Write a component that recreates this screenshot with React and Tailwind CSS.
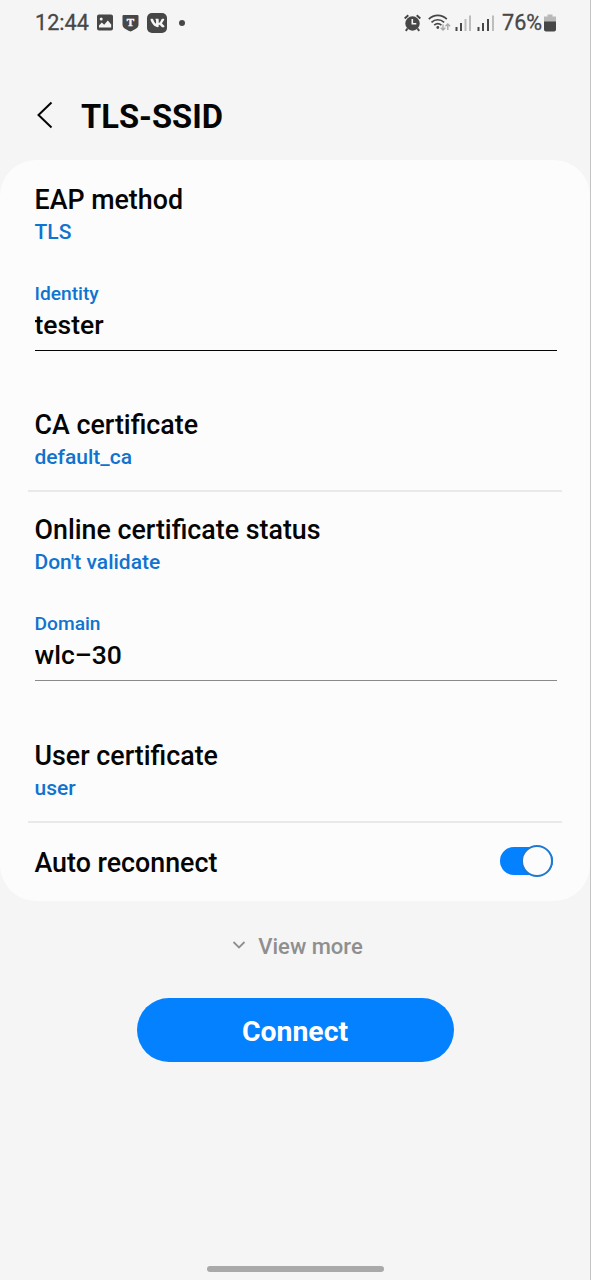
import React, { useState } from 'react';
import { FaVk } from 'react-icons/fa';

const StatusBar = () => (
  <div className="flex h-[45px] items-center justify-between pl-[35px] pr-[34px] text-[#474747]">
    <div className="flex items-center">
      <span className="w-[62px] text-[21.6px] font-normal leading-[26px] [-webkit-text-stroke:0.3px_#474747]">12:44</span>
      <svg className="mr-[9px]" width="16" height="17" viewBox="0 0 16 17">
        <path
          fill="currentColor"
          fillRule="evenodd"
          d="M2 0.5h12a2 2 0 0 1 2 2v12a2 2 0 0 1-2 2H2a2 2 0 0 1-2-2v-12a2 2 0 0 1 2-2zM2 13.6h12.2v-3.2l-3.4-3.8-3.6 4.2-2.4-2.2L2 11.4zM4.2 3.4a1.5 1.5 0 1 0 0 3 1.5 1.5 0 0 0 0-3z"
        />
      </svg>
      <svg className="mr-[8px]" width="17" height="18" viewBox="0 0 17 18">
        <path fill="currentColor" d="M1.5 1h14a1 1 0 0 1 1 1v8.5c0 3-2.5 4.7-8 7C3 15.2.5 13.5.5 10.5V2a1 1 0 0 1 1-1z" />
        <text
          x="8.5"
          y="12"
          textAnchor="middle"
          fill="#f5f5f5"
          stroke="#f5f5f5"
          strokeWidth="0.5"
          className="font-['Liberation_Serif',serif] text-[11px] font-bold"
        >
          T
        </text>
      </svg>
      <span className="mr-[12px] flex h-[20px] w-[20px] items-center justify-center rounded-[5px] bg-[#474747]">
        <FaVk className="h-[16px] w-[15px] text-[#f5f5f5]" />
      </span>
      <span className="h-[6px] w-[6px] rounded-full bg-[#474747]" />
    </div>

    <div className="flex items-center">
      {/* alarm */}
      <svg className="mr-[7px]" width="17" height="18" viewBox="0 0 17 18">
        <circle cx="8.5" cy="9.5" r="7.2" fill="currentColor" />
        <path stroke="currentColor" strokeWidth="2" fill="none" d="M0.7 4.5 4.3 1.3M16.3 4.5 12.7 1.3M3.5 14.5 1.8 16.8M13.5 14.5 15.2 16.8" />
        <path stroke="#f5f5f5" strokeWidth="1.6" fill="none" d="M8.3 5v4.8h4" />
      </svg>
      {/* wifi */}
      <svg className="mr-[4px]" width="23" height="18" viewBox="0 0 23 18">
        <g fill="none" stroke="currentColor" strokeWidth="1.7">
          <path d="M0.8 5.2c5-5 13-5 18 0" />
          <path d="M3.5 8.3c3.6-3.4 9-3.4 12.6 0" />
          <path d="M6.2 11.2c2.2-2 5-2 7.2 0" />
        </g>
        <circle cx="9.8" cy="13.5" r="1.4" fill="currentColor" />
        <path fill="none" stroke="#a9a9a9" strokeWidth="1.4" d="M15 10.5v5.5M12.7 13.8l2.3 2.3 2.3-2.3M19.8 16v-5.5M17.5 12.3l2.3-2.3 2.3 2.3" />
      </svg>
      {/* sim 1 */}
      <svg className="mr-[5px]" width="17" height="18" viewBox="0 0 17 18">
        <path stroke="currentColor" strokeWidth="2" d="M1.5 17v-4M6 17V9" />
        <path stroke="#bdbdbd" strokeWidth="2" d="M10.5 17V5M15 17V1.5" />
      </svg>
      {/* sim 2 */}
      <svg className="mr-[8px]" width="17" height="18" viewBox="0 0 17 18">
        <path stroke="currentColor" strokeWidth="2" d="M1.5 17v-4M6 17V9M11 17V5" />
        <path stroke="#bdbdbd" strokeWidth="2" d="M16 17V1.5" />
      </svg>
      <span className="w-[40px] whitespace-nowrap text-[21.6px] font-normal leading-[26px] [-webkit-text-stroke:0.3px_#474747]">76%</span>
      <svg className="ml-[2px]" width="12" height="18" viewBox="0 0 12 18">
        <path fill="#b9b9b9" d="M3.5 0.5h5v2H12V8H0V2.5h3.5z" />
        <path fill="currentColor" d="M0 7.5h12v8a2 2 0 0 1-2 2H2a2 2 0 0 1-2-2z" />
      </svg>
    </div>
  </div>
);

const Preference = ({ title, value }) => (
  <div className="px-[34.5px]">
    <div className="text-[26.8px] leading-[32px]">{title}</div>
    <div className="mt-[3px] text-[21px] leading-[26px] text-[#0f73cf]">{value}</div>
  </div>
);

const TextField = ({ label, value, onChange, lineClass }) => (
  <label className="mx-[34.5px] mt-[37px] block">
    <span className="block text-[19.2px] leading-[24px] text-[#0f73cf]">{label}</span>
    <input
      className={`mt-[2px] block h-[43px] w-[522px] border-b bg-transparent pb-[10px] text-[26.5px] leading-[32px] outline-none ${lineClass}`}
      value={value}
      onChange={onChange}
    />
  </label>
);

const Divider = () => <div className="mx-[28px] mt-[20px] h-[2px] bg-[#e9e9e9]" />;

const App = () => {
  const [identity, setIdentity] = useState('tester');
  const [domain, setDomain] = useState('wlc–30');
  const [autoReconnect, setAutoReconnect] = useState(true);

  return (
    <div className="flex h-[1280px] w-[591px] flex-col border-r border-[#c4c4c4] bg-[#f5f5f5] font-[Roboto,sans-serif] font-medium text-[#050505]">
      <StatusBar />

      <header className="flex h-[115px] items-center pb-[1px] pt-[27px]">
        <svg className="ml-[36px] mr-[27px] -mt-[2px]" width="18" height="28" viewBox="0 0 18 28">
          <path fill="none" stroke="currentColor" strokeWidth="2" d="M15.5 1.5 2.5 14l13 12.5" />
        </svg>
        <h1 className="pt-[2px] text-[32.7px] font-bold leading-[40px]">TLS-SSID</h1>
      </header>

      <main className="h-[741px] rounded-[36px] bg-[#fcfcfc] pt-[24px]">
        <Preference title="EAP method" value="TLS" />
        <TextField label="Identity" value={identity} onChange={(e) => setIdentity(e.target.value)} lineClass="border-[#050505]" />
        <div className="h-[58px]" />
        <Preference title="CA certificate" value="default_ca" />
        <Divider />

        <div className="h-[22px]" />
        <Preference title="Online certificate status" value="Don't validate" />
        <TextField label="Domain" value={domain} onChange={(e) => setDomain(e.target.value)} lineClass="border-[#8a8a8a]" />
        <div className="h-[59px]" />
        <Preference title="User certificate" value="user" />
        <Divider />

        <div className="flex h-[76px] items-center justify-between pl-[34.5px] pr-[37px]">
          <span className="pt-[3px] text-[26.8px] leading-[32px]">Auto reconnect</span>
          <button
            type="button"
            className={`flex h-[28px] w-[53px] items-center rounded-full ${autoReconnect ? 'justify-end bg-[#0381fe]' : 'justify-start bg-[#9a9a9a]'}`}
            onClick={() => setAutoReconnect(!autoReconnect)}
          >
            <span className="h-[32px] w-[32px] shrink-0 rounded-full border-2 border-[#2079d0] bg-[#fcfcfc]" />
          </button>
        </div>
      </main>

      <div className="mt-[31px] flex h-[30px] items-center justify-center pl-[5px] text-[#8f8f8f]">
        <svg className="mr-[12px] -mt-[4px]" width="14" height="10" viewBox="0 0 14 10">
          <path fill="none" stroke="currentColor" strokeWidth="1.8" d="M1.5 2 7 7.5 12.5 2" />
        </svg>
        <span className="text-[22px] leading-[30px]">View more</span>
      </div>

      <button type="button" className="mx-auto mt-[36px] h-[64px] w-[317px] rounded-full bg-[#0381fe] pt-[4px] text-[28.4px] font-bold text-white">
        Connect
      </button>

      <div className="mx-auto mb-[8px] mt-auto h-[6px] w-[177px] rounded-full bg-[#a9a9a9]" />
    </div>
  );
};

export default App;
